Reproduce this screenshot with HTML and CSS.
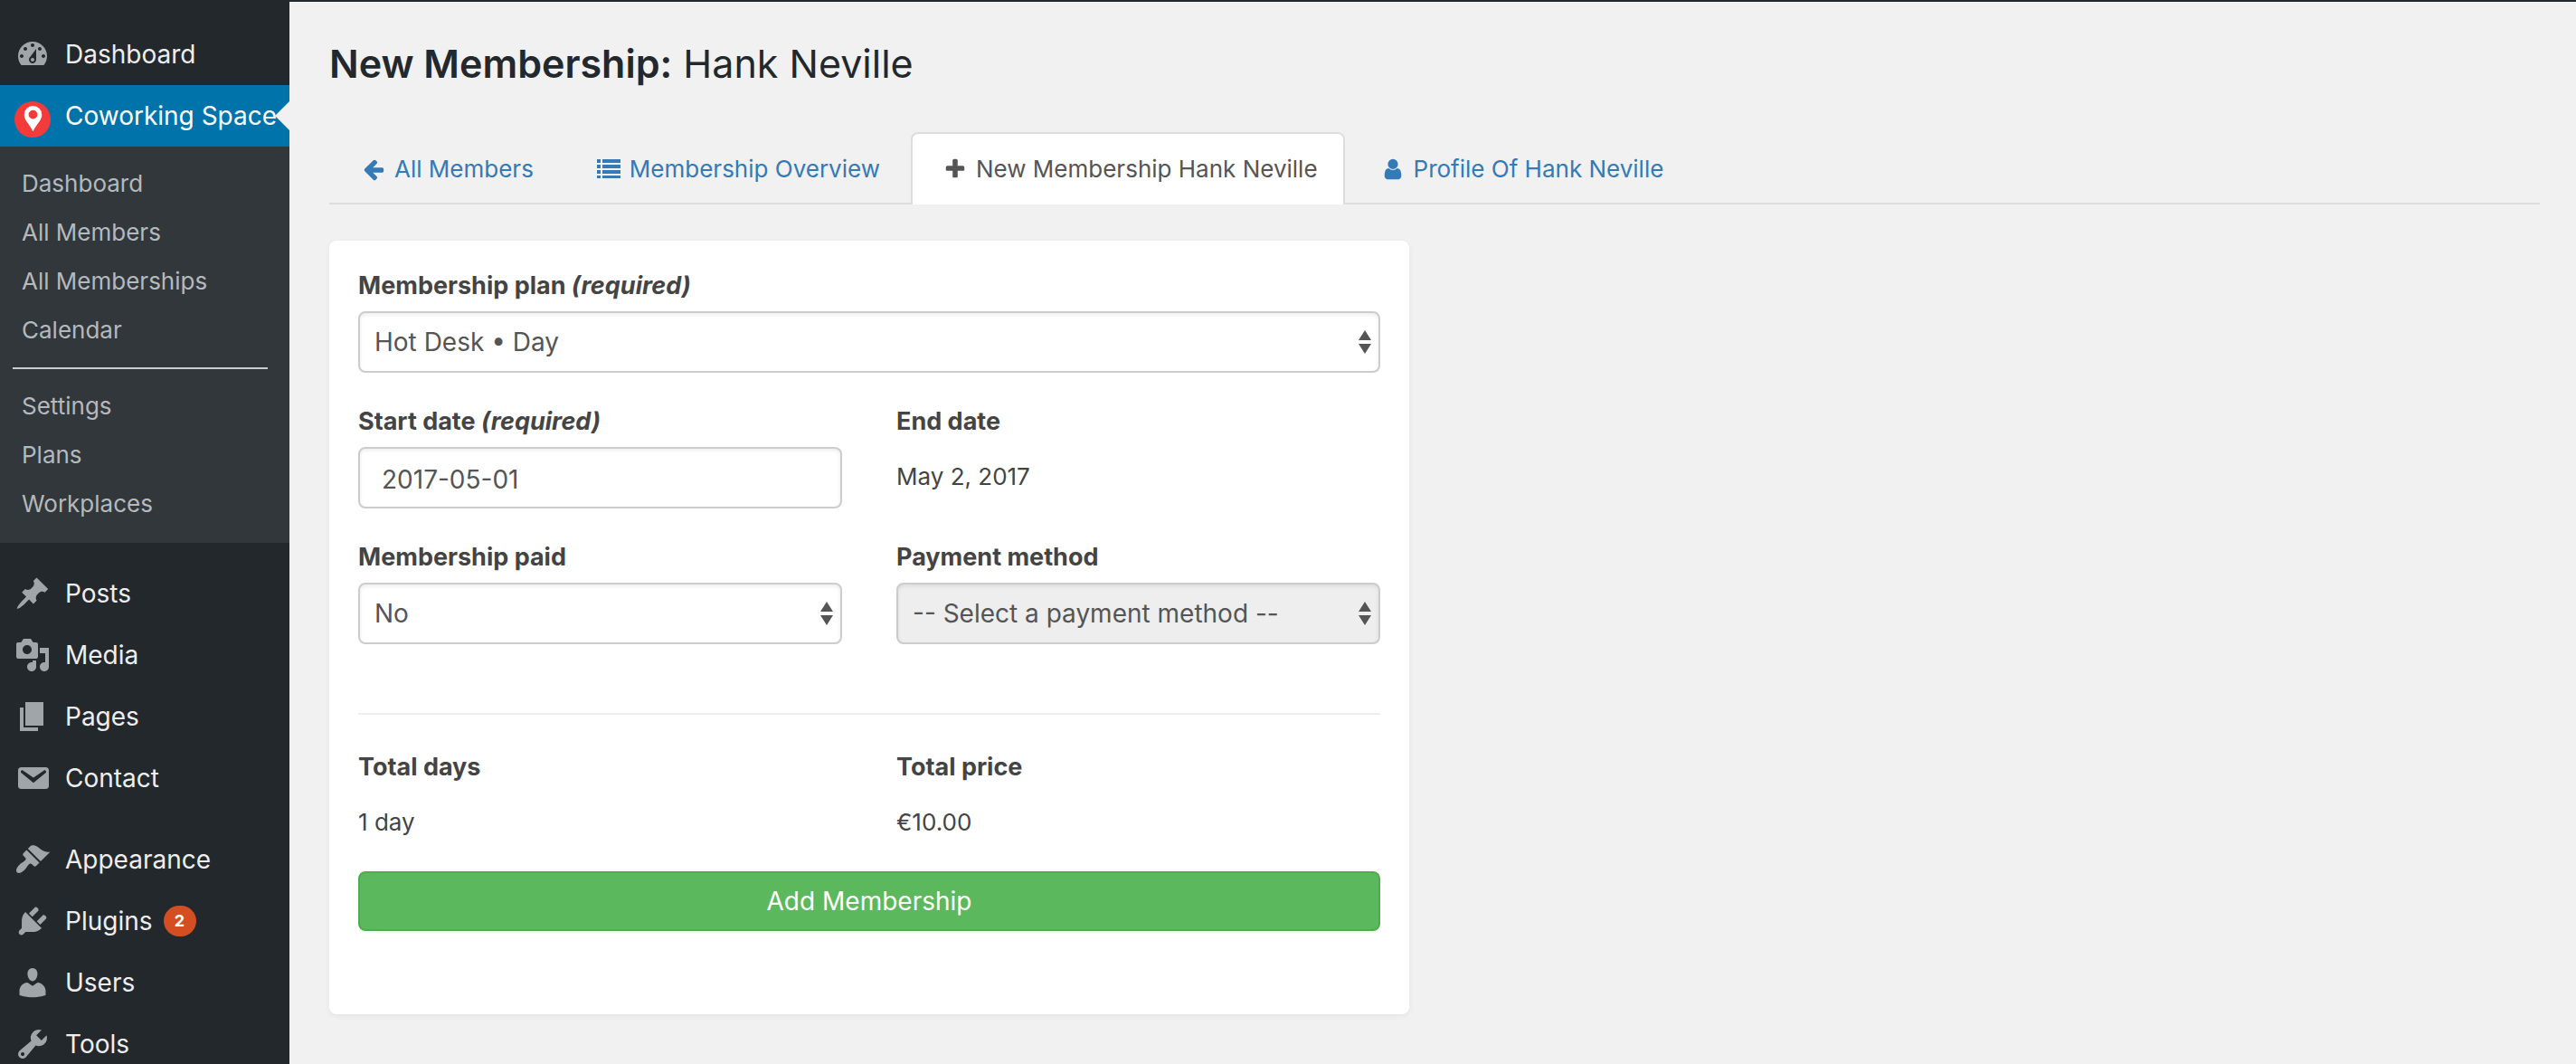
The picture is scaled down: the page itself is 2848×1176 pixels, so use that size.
FILE: index.html
```html
<!DOCTYPE html>
<html lang="en">
<head>
<meta charset="utf-8">
<meta name="viewport" content="width=device-width, initial-scale=1">
<title>New Membership: Hank Neville</title>
<link rel="stylesheet" href="styles.css">
</head>
<body>
<div class="admin">
  <nav class="sidebar" aria-label="Main menu">
    <ul class="menu">
      <li><a class="menu-link" href="#"><svg class="menu-icon" viewBox="0 0 20 20" aria-hidden="true"><path d="M3.76 16h12.48c1.1-1.37 1.76-3.11 1.76-5 0-4.42-3.58-8-8-8s-8 3.58-8 8c0 1.89.66 3.63 1.76 5zM10 4c.55 0 1 .45 1 1s-.45 1-1 1-1-.45-1-1 .45-1 1-1zM6 6c.55 0 1 .45 1 1s-.45 1-1 1-1-.45-1-1 .45-1 1-1zm8 0c.55 0 1 .45 1 1s-.45 1-1 1-1-.45-1-1 .45-1 1-1zm-5.37 5.55L12 7v6c0 1.1-.9 2-2 2s-2-.9-2-2c0-.57.24-1.08.63-1.45zM4 10c.55 0 1 .45 1 1s-.45 1-1 1-1-.45-1-1 .45-1 1-1zm12 0c.55 0 1 .45 1 1s-.45 1-1 1-1-.45-1-1 .45-1 1-1zm-5 3c0-.55-.45-1-1-1s-1 .45-1 1 .45 1 1 1 1-.45 1-1z"/></svg>Dashboard</a></li>
      <li>
        <a class="menu-link current" href="#" aria-current="true"><svg class="menu-icon pin-icon" viewBox="0 0 40 48" aria-hidden="true"><circle cx="20" cy="28" r="20" fill="#f33b3b"/><path fill="#fff" fill-rule="evenodd" d="M20.500 13a9.800 9.800 0 0 0-9.800 9.800c0 6.200 5.800 10.200 9.800 18.400 4-8.200 9.800-12.200 9.800-18.400A9.800 9.800 0 0 0 20.500 13zm0 4.700a4.900 4.900 0 1 1 0 9.800 4.900 4.900 0 0 1 0-9.800z"/></svg>Coworking Space</a>
        <ul class="submenu">
          <li><a href="#">Dashboard</a></li>
          <li><a href="#">All Members</a></li>
          <li><a href="#">All Memberships</a></li>
          <li><a href="#">Calendar</a></li>
          <li class="divided"><a href="#">Settings</a></li>
          <li><a href="#">Plans</a></li>
          <li><a href="#">Workplaces</a></li>
        </ul>
      </li>
    </ul>
    <ul class="menu">
      <li><a class="menu-link" href="#"><svg class="menu-icon" viewBox="0 0 20 20" aria-hidden="true"><path d="M10.440 3.020l1.820-1.820 6.360 6.350-1.830 1.820c-1.050-.68-2.480-.57-3.410.36l-.75.75c-.92.93-1.040 2.350-.35 3.410l-1.830 1.820-2.410-2.410-2.800 2.790c-.42.42-3.380 2.710-3.800 2.290s1.860-3.390 2.280-3.810l2.790-2.790L4.100 9.360l1.830-1.820c1.050.69 2.480.57 3.400-.36l.75-.75c.93-.92 1.050-2.350.36-3.410z"/></svg>Posts</a></li>
      <li><a class="menu-link" href="#"><svg class="menu-icon" viewBox="0 0 20 20" aria-hidden="true"><path d="M13 11V4c0-.55-.45-1-1-1h-1.670L9 1H5L3.670 3H2c-.55 0-1 .45-1 1v7c0 .55.45 1 1 1h10c.55 0 1-.45 1-1zM7 4.500c1.380 0 2.500 1.120 2.500 2.500S8.380 9.500 7 9.500 4.500 8.380 4.500 7 5.620 4.500 7 4.500zM14 6h5v10.500c0 1.380-1.120 2.500-2.500 2.500S14 17.880 14 16.500s1.120-2.500 2.500-2.500c.17 0 .34.02.5.05V9h-3V6zm-4 8.050V13h2v3.500c0 1.380-1.120 2.500-2.500 2.500S7 17.880 7 16.500 8.120 14 9.500 14c.17 0 .34.02.5.05z"/></svg>Media</a></li>
      <li><a class="menu-link" href="#"><svg class="menu-icon" viewBox="0 0 20 20" aria-hidden="true"><path d="M6 15V2h10v13H6zm-1 1h8v2H3V5h2v11z"/></svg>Pages</a></li>
      <li><a class="menu-link" href="#"><svg class="menu-icon" viewBox="0 0 20 20" aria-hidden="true"><path d="M3.870 4h13.250C18.370 4 19 4.590 19 5.790v8.420c0 1.190-.63 1.790-1.880 1.790H3.870c-1.250 0-1.880-.6-1.880-1.790V5.790c0-1.200.63-1.790 1.880-1.790zm6.620 8.600l6.740-5.530c.24-.2.43-.66.13-1.070-.29-.41-.82-.42-1.170-.17l-5.700 3.860L4.800 5.830c-.35-.25-.88-.24-1.170.17-.3.41-.11.87.13 1.070z"/></svg>Contact</a></li>
    </ul>
    <ul class="menu">
      <li><a class="menu-link" href="#"><svg class="menu-icon" viewBox="0 0 20 20" aria-hidden="true"><path d="M14.480 11.060L7.410 3.990l1.500-1.500c.5-.56 2.300-.47 3.510.32 1.210.8 1.430 1.280 2.910 2.100 1.180.64 2.450 1.260 4.450.85zm-.71.71L6.700 4.700 4.930 6.470c-.39.39-.39 1.020 0 1.410l1.060 1.060c.39.39.39 1.030 0 1.420-.6.6-1.430 1.110-2.210 1.690-.35.26-.7.53-1.010.84C1.430 14.230.4 16.080 1.400 17.070c.99 1 2.840-.03 4.180-1.360.31-.31.58-.66.85-1.020.57-.78 1.080-1.610 1.690-2.210.39-.39 1.020-.39 1.410 0l1.060 1.060c.39.39 1.020.39 1.410 0z"/></svg>Appearance</a></li>
      <li><a class="menu-link" href="#"><svg class="menu-icon" viewBox="0 0 20 20" aria-hidden="true"><path d="M13.110 4.360L9.870 7.600 8 5.730l3.240-3.240c.35-.34 1.050-.2 1.560.32.52.51.66 1.210.31 1.550zm-8 1.770l.91-1.120 9.010 9.010-1.190.84c-.71.71-2.630 1.160-3.820 1.160H6.140L4.900 17.260c-.59.59-1.540.59-2.120 0-.59-.58-.59-1.530 0-2.120l1.240-1.240v-3.880c0-1.130.4-3.190 1.090-3.890zm7.260 3.970l3.240-3.240c.34-.35 1.040-.21 1.550.31.52.51.66 1.210.31 1.550l-3.240 3.250z"/></svg>Plugins<span class="count">2</span></a></li>
      <li><a class="menu-link" href="#"><svg class="menu-icon" viewBox="0 0 20 20" aria-hidden="true"><path d="M10 9.250c-2.270 0-2.730-3.440-2.730-3.440C7 4.020 7.820 2 9.970 2c2.160 0 2.980 2.020 2.710 3.810 0 0-.41 3.440-2.680 3.440zm0 2.570L12.720 10c2.390 0 4.520 2.330 4.520 4.530v2.490s-3.650 1.130-7.240 1.130c-3.650 0-7.240-1.130-7.240-1.130v-2.490c0-2.250 1.940-4.480 4.470-4.480z"/></svg>Users</a></li>
      <li><a class="menu-link" href="#"><svg class="menu-icon" viewBox="0 0 20 20" aria-hidden="true"><path d="M16.680 9.770c-1.340 1.340-3.300 1.670-4.950.99l-5.410 6.520c-.99.99-2.590.99-3.580 0s-.99-2.590 0-3.570l6.520-5.420c-.68-1.650-.35-3.610.99-4.950 1.280-1.280 3.120-1.620 4.720-1.060l-2.890 2.890 2.820 2.820 2.860-2.870c.53 1.580.18 3.390-1.080 4.650zM3.810 16.210c.4.39 1.040.39 1.430 0 .4-.4.4-1.040 0-1.430-.39-.4-1.030-.4-1.430 0-.39.39-.39 1.030 0 1.430z"/></svg>Tools</a></li>
    </ul>
  </nav>

  <main class="content">
    <h1 class="title"><strong>New Membership:</strong> Hank Neville</h1>

    <nav class="tabs" aria-label="Member pages">
      <a class="tab" href="#"><svg class="tab-icon" viewBox="-256 0 2304 1792" aria-hidden="true"><path d="M1664 896v128q0 53-32.500 90.500t-84.500 37.500h-704l293 294q38 36 38 90t-38 90l-75 76q-37 37-90 37-52 0-91-37l-651-652q-37-37-37-90 0-52 37-91l651-650q38-38 91-38 52 0 90 38l75 74q38 38 38 91t-38 91l-293 293h704q52 0 84.500 37.500t32.500 90.500z"/></svg>All Members</a>
      <a class="tab" href="#"><svg class="tab-icon" viewBox="0 0 34 26" aria-hidden="true"><path d="M4 2h4v4H4zM10 2h20v4H10zM4 8h4v4H4zM10 8h20v4H10zM4 14h4v4H4zM10 14h20v4H10zM4 20h4v3H4zM10 20h20v3H10z"/></svg>Membership Overview</a>
      <a class="tab selected" href="#" aria-current="page"><svg class="tab-icon" viewBox="-256 0 2304 1792" aria-hidden="true"><path d="M1600 736v192q0 40-28 68t-68 28h-416v416q0 40-28 68t-68 28h-192q-40 0-68-28t-28-68v-416h-416q-40 0-68-28t-28-68v-192q0-40 28-68t68-28h416v-416q0-40 28-68t68-28h192q40 0 68 28t28 68v416h416q40 0 68 28t28 68z"/></svg>New Membership Hank Neville</a>
      <a class="tab" href="#"><svg class="tab-icon" viewBox="-256 0 2304 1792" aria-hidden="true"><path d="M1536 1399q0 109-62.500 187t-150.500 78h-854q-88 0-150.500-78t-62.500-187q0-85 8.500-160.500t31.500-152 58.500-131 94-89 134.500-34.500q131 128 313 128t313-128q76 0 134.500 34.500t94 89 58.500 131 31.500 152 8.500 160.500zm-256-887q0 159-112.500 271.500t-271.500 112.500-271.500-112.500-112.500-271.500 112.500-271.500 271.500-112.500 271.500 112.500 112.500 271.500z"/></svg>Profile Of Hank Neville</a>
    </nav>

    <div class="panels">
      <form class="card">
        <div class="row">
          <div class="field">
            <label for="plan">Membership plan <em>(required)</em></label>
            <select class="control" id="plan" required><option>Hot Desk • Day</option></select>
          </div>
        </div>
        <div class="row halves">
          <div class="field">
            <label for="start">Start date <em>(required)</em></label>
            <input class="control" id="start" type="text" value="2017-05-01" required>
          </div>
          <div class="field">
            <label for="end">End date</label>
            <output class="value" id="end">May 2, 2017</output>
          </div>
        </div>
        <div class="row halves">
          <div class="field">
            <label for="paid">Membership paid</label>
            <select class="control" id="paid"><option>No</option><option>Yes</option></select>
          </div>
          <div class="field">
            <label for="method">Payment method</label>
            <select class="control" id="method" disabled><option>-- Select a payment method --</option></select>
          </div>
        </div>
        <hr class="rule">
        <div class="row halves">
          <div class="field">
            <label for="days">Total days</label>
            <output class="value" id="days">1 day</output>
          </div>
          <div class="field">
            <label for="price">Total price</label>
            <output class="value" id="price">€10.00</output>
          </div>
        </div>
        <button class="submit" type="submit">Add Membership</button>
      </form>
    </div>
  </main>
</div>
</body>
</html>
```
FILE: styles.css
```css
*,
*::before,
*::after {
  box-sizing: border-box;
}

body {
  margin: 0;
  background: #f1f1f1;
  color: #444;
  font: 26px/36px Inter, "Liberation Sans", sans-serif;
}

a {
  color: #337ab7;
  text-decoration: none;
}

.admin {
  display: flex;
  align-items: stretch;
  height: 100vh;
}

/* Sidebar */
.sidebar {
  flex: 0 0 320px;
  display: flex;
  flex-direction: column;
  gap: 22px;
  padding-top: 26px;
  overflow: hidden;
  background: #23282d;
}

.menu,
.submenu {
  margin: 0;
  padding: 0;
  list-style: none;
}

.menu-link {
  display: flex;
  align-items: center;
  height: 68px;
  padding-left: 16px;
  color: #eee;
  font-size: 28px;
  white-space: nowrap;
}

.menu-icon {
  flex: none;
  width: 40px;
  height: 40px;
  margin-right: 16px;
  fill: #a0a5aa;
}

.pin-icon {
  height: 48px;
}

.menu-link.current {
  position: relative;
  background: #0073aa;
  color: #fff;
}

.menu-link.current::after {
  content: "";
  position: absolute;
  top: 18px;
  right: 0;
  border: 16px solid transparent;
  border-left-width: 0;
  border-right-color: #f1f1f1;
}

.submenu {
  padding: 14px 0 16px;
  background: #32373c;
}

.submenu a {
  display: block;
  padding: 9px 24px;
  color: #b4b9be;
}

.submenu .divided::before {
  content: "";
  display: block;
  height: 2px;
  margin: 14px 24px 14px 14px;
  background: #ccc;
}

.count {
  min-width: 36px;
  margin-left: 12px;
  border-radius: 20px;
  background: #d54e21;
  color: #fff;
  font-size: 18px;
  font-weight: 700;
  line-height: 34px;
  text-align: center;
}

/* Content */
.content {
  flex: 1;
  min-width: 0;
  padding: 38px 40px 54px 44px;
  overflow: auto;
  border-top: 2px solid #23282d;
}

.title {
  margin: 0;
  color: #23282d;
  font-size: 43px;
  font-weight: 400;
  line-height: 60px;
}

.title strong {
  font-weight: 600;
}

.tabs {
  display: flex;
  gap: 4px;
  margin-top: 46px;
  border-bottom: 2px solid #ddd;
}

.tab {
  display: flex;
  align-items: center;
  gap: 6px;
  height: 80px;
  margin-bottom: -2px;
  padding: 0 28px 0 30px;
  border: 2px solid transparent;
  border-bottom: 0;
  border-radius: 8px 8px 0 0;
  white-space: nowrap;
}

.tab.selected {
  border-color: #ddd;
  background: #fff;
  color: #555;
}

.tab-icon {
  width: 34px;
  height: 26px;
  fill: currentColor;
}

.panels {
  display: grid;
  grid-template-columns: 1fr 1fr;
  gap: 56px;
  margin-top: 40px;
}

.card {
  display: flex;
  flex-direction: column;
  gap: 36px;
  padding: 32px 32px 92px;
  border-radius: 8px;
  background: #fff;
  box-shadow: 0 2px 6px rgba(0, 0, 0, 0.06);
}

.halves {
  display: grid;
  grid-template-columns: 1fr 1fr;
  gap: 60px;
}

.field {
  display: flex;
  flex-direction: column;
  gap: 10px;
}

label {
  font-size: 27px;
  font-weight: 700;
}

.control {
  width: 100%;
  height: 68px;
  margin: 0;
  padding: 0 16px;
  border: 2px solid #ccc;
  border-radius: 8px;
  background: #fff;
  box-shadow: inset 0 2px 4px rgba(0, 0, 0, 0.08);
  color: #555;
  font: 28px/40px Inter, "Liberation Sans", sans-serif;
}

input.control {
  padding: 4px 24px 0;
}

select.control {
  appearance: none;
  background: #fff url("data:image/svg+xml,%3Csvg xmlns='http://www.w3.org/2000/svg' width='14' height='26'%3E%3Cpath fill='%23555' d='M7 0l7 11H0zM0 15h14L7 26z'/%3E%3C/svg%3E") no-repeat right 8px center;
}

select.control:disabled {
  background-color: #eee;
  opacity: 1;
}

.value {
  margin-top: 15px;
}

.rule {
  width: 100%;
  height: 2px;
  margin: 40px 0 4px;
  border: 0;
  background: #eee;
}

.submit {
  height: 66px;
  border: 2px solid #4cae4c;
  border-radius: 8px;
  background: #5cb85c;
  color: #fff;
  font: 28px/40px Inter, "Liberation Sans", sans-serif;
}
```
